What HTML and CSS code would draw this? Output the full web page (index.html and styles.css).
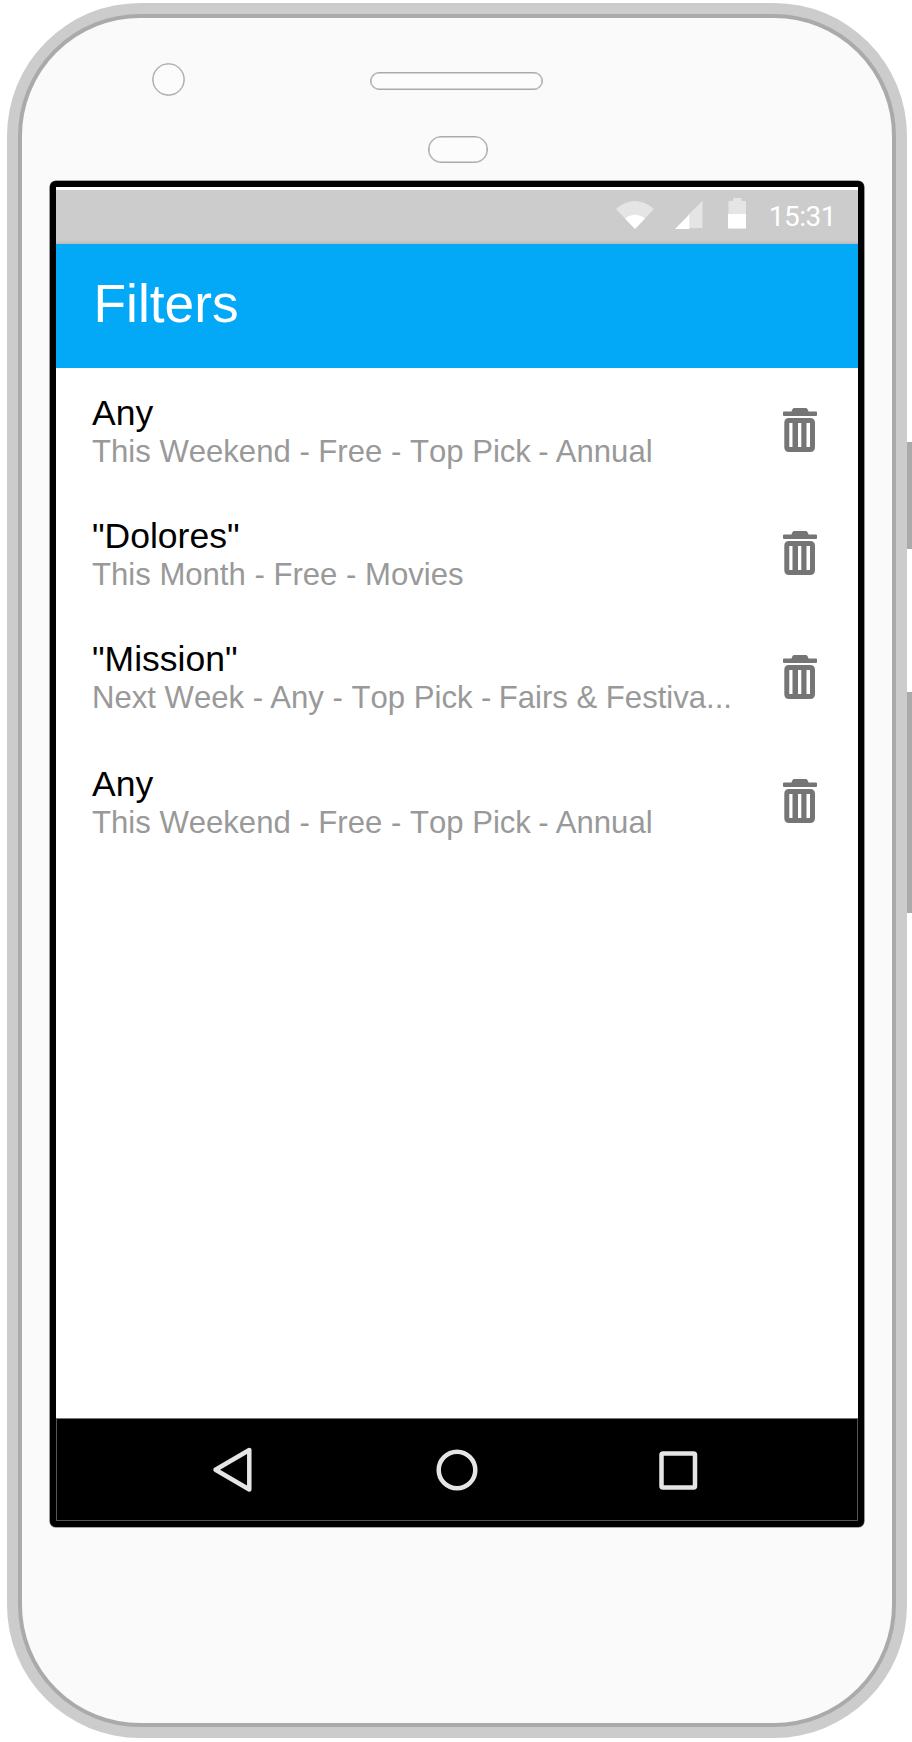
FILE: index.html
```html
<!DOCTYPE html>
<html lang="en">
<head>
<meta charset="utf-8">
<title>Filters</title>
<link rel="stylesheet" href="styles.css">
</head>
<body>
<svg class="symbols" aria-hidden="true">
  <symbol id="trash" viewBox="0 0 34 44">
    <path d="M1 3.500H8.500Q9.500 0 11 0H23Q24.500 0 25.500 3.500H33Q34 3.500 34 4.500V7Q34 8 33 8H1Q0 8 0 7V4.500Q0 3.500 1 3.500Z"/>
    <path fill-rule="evenodd" d="M6 10H27Q32 10 32 15V39Q32 44 27 44H6Q1.300 44 1.300 39V15Q1.300 10 6 10ZM6.300 15V39H9.500V15ZM15 15V39H18.300V15ZM23.500 15V39H27V15Z"/>
  </symbol>
</svg>
<div class="phone">
  <div class="key power"></div>
  <div class="key volume"></div>
  <div class="face">
    <header class="sensors">
      <span class="camera"></span>
      <span class="speaker"></span>
      <span class="proximity"></span>
    </header>
    <main class="screen">
      <div class="status">
        <svg class="wifi" viewBox="0 0 38 28"><path fill="#e5e5e5" d="M0 8Q19-8 38 8L19 28Z"/><path fill="#fff" d="M9 17.500Q19 10 29 17.500L19 28Z"/></svg>
        <svg class="signal" viewBox="0 0 28 28"><path fill="#e5e5e5" d="M27.500 0V27H13V14Z"/><path fill="#fff" d="M14.300 13.500V28H0Z"/></svg>
        <svg class="battery" viewBox="0 0 18 31"><path fill="#e5e5e5" d="M5 0H13.500V3H17Q18 3 18 4V16H.500V4Q.500 3 1.500 3H5Z"/><path fill="#fff" d="M0 16H18.500V29.500Q18.500 30.500 17.500 30.500H1Q0 30.500 0 29.500Z"/></svg>
        <span class="time">15:31</span>
      </div>
      <div class="appbar"><h1 class="title">Filters</h1></div>
      <ul class="list">
        <li class="row"><div class="text"><div class="name">Any</div><div class="detail">This Weekend - Free - Top Pick <span class="tight">- </span><span class="tight">Annual</span></div></div><svg class="trash"><use href="#trash"/></svg></li>
        <li class="row"><div class="text"><div class="name">"Dolores"</div><div class="detail">This Month - Free - Movies</div></div><svg class="trash"><use href="#trash"/></svg></li>
        <li class="row tall"><div class="text"><div class="name">"Mission"</div><div class="detail">Next Week - <span class="tight">Any</span> - Top Pick - <span class="tight">Fairs</span> &amp; Festiva...</div></div><svg class="trash"><use href="#trash"/></svg></li>
        <li class="row"><div class="text"><div class="name">Any</div><div class="detail">This Weekend - Free - Top Pick <span class="tight">- </span><span class="tight">Annual</span></div></div><svg class="trash"><use href="#trash"/></svg></li>
      </ul>
      <nav class="nav">
        <svg class="nav-icon" viewBox="0 0 48 48"><path d="M38.300 4V43.500L4.500 23.700Z"/></svg>
        <svg class="nav-icon" viewBox="0 0 48 48"><circle cx="24" cy="24" r="18.300"/></svg>
        <svg class="nav-icon" viewBox="0 0 48 48"><rect x="6.500" y="7.600" width="33.500" height="33.800" rx="1.500"/></svg>
      </nav>
    </main>
  </div>
</div>
</body>
</html>
```
FILE: styles.css
```css
* { box-sizing: border-box; }
body {
  margin: 0;
  width: 912px;
  height: 1742px;
  overflow: hidden;
  padding: 3px 5px 4px 7px;
  background: #fff;
  font-family: "Liberation Sans", Arial, sans-serif;
}
.symbols { display: none; }
.phone {
  position: relative;
  width: 900px;
  height: 1735px;
  padding: 11px;
  border-radius: 133px;
  background: #ccc;
}
.key { position: absolute; left: 900px; width: 5px; background: #aaa; }
.power { top: 439px; height: 107px; }
.volume { top: 689px; height: 221px; }
.face {
  width: 878px;
  height: 1713px;
  border: 4px solid #aaa;
  border-radius: 122px;
  background: #fafafa;
  padding-left: 28px;
}
.sensors {
  display: grid;
  grid-template-columns: 320px 174px;
  grid-template-rows: 73px 72px 18px;
  height: 163px;
}
.sensors span {
  border: 1px solid #aaa;
  box-shadow: inset 0 0 0 0.6px #aaa;
  background: #fcfcfc;
}
.camera { width: 33px; height: 33px; border-radius: 50%; margin: 45px 0 0 102px; }
.speaker { width: 173px; height: 18px; border-radius: 9px; margin-top: 54px; }
.proximity { grid-column: 2; width: 60px; height: 27px; border-radius: 13px; margin: 45px 0 0 58px; }
.screen {
  width: 814px;
  height: 1346px;
  border: 6px solid #000;
  border-radius: 6px;
  box-shadow: 0 0 0 0.6px #555;
  background: #fff;
  display: flex;
  flex-direction: column;
}
.status {
  height: 54px;
  margin-top: 3px;
  padding-right: 22px;
  background: linear-gradient(#ccc 50px, #bbb 54px);
  display: flex;
  justify-content: flex-end;
}
.wifi { width: 38px; height: 28px; margin: 11px 21px 0 0; }
.signal { width: 28px; height: 28px; margin: 11px 25px 0 0; }
.battery { width: 18px; height: 31px; margin: 8px 22.500px 0 0; }
.time { font-family: Roboto, "Liberation Sans", sans-serif; font-size: 28px; letter-spacing: -0.5px; line-height: 32px; color: #fff; margin-top: 11px; }
.appbar { height: 124px; background: #03a9f7; padding: 30px 37.500px; }
.title { margin: 0; font-size: 53.300px; line-height: 60px; font-weight: 400; color: #fff; }
.list { margin: 0; padding: 23px 41px 0 36px; list-style: none; flex: 1; }
.row { display: flex; justify-content: space-between; height: 123px; }
.row.tall { height: 125px; }
.name { font-size: 35.500px; line-height: 44px; color: #000; white-space: nowrap; }
.detail { font-size: 31.100px; line-height: 34px; color: #999; white-space: nowrap; font-kerning: none; }
.tight { margin-left: -1.400px; }
.trash { width: 34px; height: 44px; margin-top: 17px; fill: #757575; }
.tall .trash { margin-top: 18px; }
.nav {
  height: 103px;
  background: #000;
  border: 1px solid #555;
  border-top-color: #777;
  display: flex;
  justify-content: center;
  gap: 174px;
  padding-top: 27px;
}
.nav-icon { width: 48px; height: 48px; fill: none; stroke: #e5e5e5; stroke-width: 4.500; stroke-linejoin: round; }
```
